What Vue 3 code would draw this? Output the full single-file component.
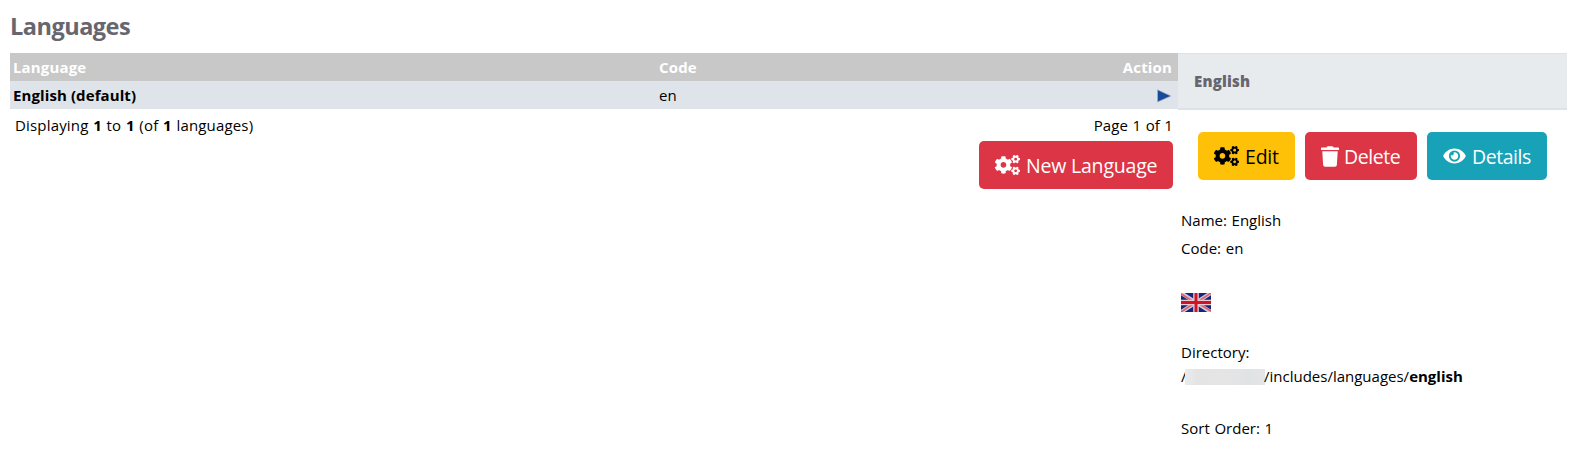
<script setup>
import { h } from 'vue'

const smallCog = 'M512.1 191l-8.2 14.3c-3 5.3-9.4 7.5-15.1 5.4-11.8-4.4-22.6-10.7-32.1-18.6-4.6-3.8-5.8-10.5-2.8-15.7l8.2-14.3c-6.9-8-12.3-17.3-15.9-27.4h-16.5c-6 0-11.2-4.3-12.2-10.3-2-12-2.1-24.6 0-37.1 1-6 6.2-10.4 12.2-10.4h16.5c3.6-10.1 9-19.4 15.9-27.4l-8.2-14.3c-3-5.2-1.9-11.9 2.8-15.7 9.5-7.9 20.4-14.2 32.1-18.6 5.7-2.1 12.1.1 15.1 5.4l8.2 14.3c10.5-1.9 21.2-1.9 31.7 0L552 6.3c3-5.3 9.4-7.5 15.1-5.4 11.8 4.4 22.6 10.7 32.1 18.6 4.6 3.8 5.8 10.5 2.8 15.7l-8.2 14.3c6.9 8 12.3 17.3 15.9 27.4h16.5c6 0 11.2 4.3 12.2 10.3 2 12 2.1 24.6 0 37.1-1 6-6.2 10.4-12.2 10.4h-16.5c-3.6 10.1-9 19.4-15.9 27.4l8.2 14.3c3 5.2 1.9 11.9-2.8 15.7-9.5 7.9-20.4 14.2-32.1 18.6-5.7 2.1-12.1-.1-15.1-5.4l-8.2-14.3c-10.4 1.9-21.2 1.9-31.7 0zm-10.5-58.8c38.5 29.6 82.4-14.3 52.8-52.8-38.5-29.7-82.4 14.3-52.8 52.8z'
const bigCog = 'M386.3 286.1l33.7 16.8c10.1 5.8 14.5 18.1 10.5 29.1-8.9 24.2-26.4 46.4-42.6 65.8-7.4 8.9-20.2 11.1-30.3 5.3l-29.1-16.8c-16 13.7-34.6 24.6-54.9 31.7v33.6c0 11.6-8.3 21.6-19.7 23.6-24.6 4.2-50.4 4.4-75.9 0-11.5-2-20-11.9-20-23.6V418c-20.3-7.2-38.9-18-54.9-31.7L74 403c-10 5.8-22.9 3.6-30.3-5.3-16.2-19.4-33.3-41.6-42.2-65.7-4-10.9.4-23.2 10.5-29.1l33.3-16.8c-3.9-20.9-3.9-42.4 0-63.4L12 205.8c-10.1-5.8-14.6-18.1-10.5-29 8.9-24.2 26-46.4 42.2-65.8 7.4-8.9 20.2-11.1 30.3-5.3l29.1 16.8c16-13.7 34.6-24.6 54.9-31.7V57.1c0-11.5 8.2-21.5 19.6-23.5 24.6-4.2 50.5-4.4 76-.1 11.5 2 20 11.9 20 23.6v33.6c20.3 7.2 38.9 18 54.9 31.7l29.1-16.8c10-5.8 22.9-3.6 30.3 5.3 16.2 19.4 33.2 41.6 42.1 65.8 4 10.9.1 23.2-10 29.1l-33.7 16.8c3.9 21 3.9 42.5 0 63.5zm-117.6 21.1c59.2-77-28.7-164.9-105.7-105.7-59.2 77 28.7 164.9 105.7 105.7z'

const Cogs = () => h('svg', { width: 25, height: 20, viewBox: '0 0 640 512', fill: 'currentColor' }, [
  h('path', { d: bigCog }),
  h('path', { d: smallCog }),
  h('path', { d: smallCog, transform: 'translate(0 298.8)' }),
])
</script>

<template>
  <main class="page">
    <h1>Languages</h1>
    <div class="columns">
      <section class="list">
        <div class="row head">
          <span class="c1">Language</span>
          <span class="c2">Code</span>
          <span class="c3">Action</span>
        </div>
        <div class="row item">
          <span class="c1"><b>English (default)</b></span>
          <span class="c2">en</span>
          <span class="c3 arrow">
            <svg width="16" height="14" viewBox="0 0 16 14"><path d="M1.500 .8L15 7L1.500 13z" fill="#174b9b" stroke="#b9aebb" stroke-width=".7" /></svg>
          </span>
        </div>
        <div class="summary">
          <span class="t-display">Displaying <b>1</b> to <b>1</b> (of <b>1</b> languages)</span>
          <span class="t-page">Page 1 of 1</span>
        </div>
        <div class="new">
          <button class="btn red new-btn"><Cogs /><span>New Language</span></button>
        </div>
      </section>
      <aside class="panel">
        <div class="panel-head"><span>English</span></div>
        <div class="actions">
          <button class="btn yellow"><Cogs /><span>Edit</span></button>
          <button class="btn red delete">
            <svg width="18" height="21" viewBox="0 0 448 512" fill="currentColor"><path d="M432 32H312l-9.4-18.7A24 24 0 0 0 281.1 0H166.8a23.72 23.72 0 0 0-21.4 13.3L136 32H16A16 16 0 0 0 0 48v32a16 16 0 0 0 16 16h416a16 16 0 0 0 16-16V48a16 16 0 0 0-16-16zM53.2 467a48 48 0 0 0 47.9 45h245.8a48 48 0 0 0 47.9-45L416 128H32z" /></svg>
            <span class="t-tight">Delete</span>
          </button>
          <button class="btn teal">
            <svg width="23" height="20" viewBox="0 0 576 512" fill="currentColor"><path d="M572.52 241.4C518.29 135.59 410.93 64 288 64S57.68 135.64 3.48 241.41a32.35 32.35 0 0 0 0 29.19C57.71 376.41 165.07 448 288 448s230.32-71.64 284.52-177.41a32.35 32.35 0 0 0 0-29.19zM288 400a144 144 0 1 1 144-144 143.93 143.93 0 0 1-144 144zm0-240a95.31 95.31 0 0 0-25.31 3.79 47.85 47.85 0 0 1-66.9 66.9A95.78 95.78 0 1 0 288 160z" /></svg>
            <span class="t-tight">Details</span>
          </button>
        </div>
        <div class="info">
          <p class="name">Name: English</p>
          <p class="code">Code: en</p>
          <svg class="flag" width="30" height="19" viewBox="0 0 30 19">
            <rect width="30" height="19" fill="#16257a" />
            <path d="M0 0L30 19M30 0L0 19" stroke="#cfc9dd" stroke-width="4" />
            <path d="M0 .7L13 9M30 18.300L17 10M30 0L17 8.500M0 19L13 10.500" stroke="#dc5f6c" stroke-width="1.600" />
            <path d="M15 0V19M0 9.500H30" stroke="#e6ccd6" stroke-width="5.600" />
            <path d="M15 0V19M0 9.500H30" stroke="#d01326" stroke-width="3" />
          </svg>
          <p class="dir">Directory:</p>
          <p class="path"><span class="slash">/</span><span class="mask"></span><span class="t-path">/includes/languages/<b>english</b></span></p>
          <p class="sort">Sort Order: 1</p>
        </div>
      </aside>
    </div>
  </main>
</template>

<style>
body { margin: 0; background: #fff; }
</style>

<style scoped>
.page {
  box-sizing: border-box;
  height: 453px;
  padding: 0 5px 0 10px;
  overflow: hidden;
  font: 15px/24px "Open Sans", "Noto Sans", sans-serif;
  color: #000;
  white-space: nowrap;
}
h1 { margin: 0; height: 53px; font-size: 23.5px; line-height: 52px; font-weight: 700; color: #67666e; letter-spacing: -.5px; }
.columns { display: flex; align-items: flex-start; }
.list { width: 1168px; }
.row { display: grid; grid-template-columns: 646px 300px 1fr; height: 28px; line-height: 28px; padding: 0 6px 0 3px; box-sizing: border-box; }
.head { background: #c8c8c8; color: #fff; font-weight: 700; letter-spacing: .15px; }
.item { background: #dee4e9; }
.item b { letter-spacing: .1px; }
.c3 { text-align: right; }
.arrow { display: flex; justify-content: flex-end; align-items: center; padding-top: 2px; }
.summary { display: flex; justify-content: space-between; height: 32px; line-height: 33px; padding: 0 5px; letter-spacing: .17px; word-spacing: .6px; }
.t-page { letter-spacing: .05px; }
.new { display: flex; justify-content: flex-end; padding-right: 5px; }
.btn { display: flex; align-items: center; box-sizing: border-box; height: 48px; border: 0; border-radius: 5px; padding: 0 0 0 16px; gap: 6px; font: 19.5px/48px "Open Sans", "Noto Sans", sans-serif; letter-spacing: -.2px; color: #fff; }
.btn span { padding-top: 1px; }
.btn svg { flex: none; }
.btn .t-tight { letter-spacing: -.45px; }
.red { background: #dc3545; width: 112px; }
.new-btn { width: 194px; }
.delete { gap: 5px; }
.yellow { background: #ffc107; width: 97px; color: #000; }
.teal { background: #17a2b8; width: 120px; }
.panel { width: 389px; }
.panel-head { box-sizing: border-box; height: 57px; line-height: 55px; padding-left: 16px; background: #e7ebee; border-top: 1px solid #dee2e6; border-bottom: 2px solid #dee2e6; color: #67666e; font-weight: 800; letter-spacing: .2px; }
.actions { display: flex; gap: 10px; padding: 22px 0 0 20px; }
.info { padding: 28px 0 0 3px; word-spacing: .8px; }
.info p { margin: 0; height: 24px; }
.info .name { height: 28px; }
.info .path { display: flex; }
.flag { display: block; margin: 33px 0 28px; }
.mask { width: 80px; height: 16px; margin-top: 5px; background: linear-gradient(90deg, #e8ecef, #e4e4e5 15%, #e5e5e6 50%, #e0e3e5 80%, #e5e5e6); }
.slash { width: 4px; }
.t-path { margin-left: -1px; }
.sort { padding-top: 28px; }
</style>
